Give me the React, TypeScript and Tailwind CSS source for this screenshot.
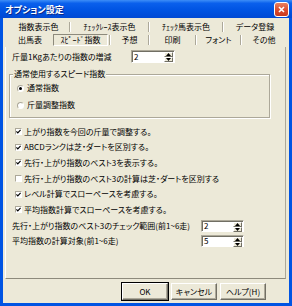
import React from "react";
import clsx from "clsx";

type Tab = { label: string; w: string; selected?: boolean; sep?: boolean };

const row1: Tab[] = [
  { label: "指数表示色", w: "w-[61px]", sep: true },
  { label: "ﾁｪｯｸﾚｰｽ表示色", w: "w-[77px]", sep: true },
  { label: "ﾁｪｯｸ馬表示色", w: "w-[72px]", sep: true },
  { label: "データ登録", w: "w-[62px]" },
];

const row2: Tab[] = [
  { label: "出馬表", w: "w-[44px]" },
  { label: "ｽﾋﾟｰﾄﾞ指数", w: "w-[57px]", selected: true, sep: true },
  { label: "予想", w: "w-[37px]", sep: true },
  { label: "印刷", w: "w-[45px]", sep: true },
  { label: "フォント", w: "w-[43px]", sep: true },
  { label: "その他", w: "w-[44px]" },
];

const checks = [
  { label: "上がり指数を今回の斤量で調整する。", on: true },
  { label: "ABCDランクは芝・ダートを区別する。", on: true },
  { label: "先行・上がり指数のベスト3を表示する。", on: true },
  { label: "先行・上がり指数のベスト3の計算は芝・ダートを区別する", on: false },
  { label: "レベル計算でスローペースを考慮する。", on: true },
  { label: "平均指数計算でスローペースを考慮する。", on: true },
];

function TabRow({ tabs }: { tabs: Tab[] }) {
  return (
    <div className="flex h-[12px] pl-[5px]">
      {tabs.map((t) => (
        <React.Fragment key={t.label}>
          {t.selected ? (
            <div className={clsx(t.w, "flex px-[1px]")}>
              <div className="flex-1 flex items-center justify-center border border-[#8d8a7c] border-r-white border-b-white">
                {t.label}
              </div>
            </div>
          ) : (
            <div className={clsx(t.w, "flex items-center justify-center")}>{t.label}</div>
          )}
          {t.sep && <div className="w-[2px] h-[10px] self-center border-l border-l-[#aca899] border-r border-r-white" />}
        </React.Fragment>
      ))}
    </div>
  );
}

function Spin({ value, w, h }: { value: string; w: string; h: string }) {
  return (
    <div className={clsx(w, h, "flex bg-white border border-[#aca899] border-r-white border-b-white shadow-[inset_1px_1px_0_#716f64]")}>
      <span className="flex-1 pl-[2px] pt-[1px] flex items-center">{value}</span>
      <div className="w-[9px] my-[1px] mr-[1px] flex flex-col">
        <div className="flex-1 flex items-center justify-center bg-[#ece9d8] border border-t-white border-l-white border-r-[#716f64] border-b-[#716f64]">
          <svg width="5" height="3" viewBox="0 0 5 3">
            <path d="M2.5 0L5 3H0z" fill="#000" />
          </svg>
        </div>
        <div className="flex-1 flex items-center justify-center bg-[#ece9d8] border border-t-white border-l-white border-r-[#716f64] border-b-[#716f64]">
          <svg width="5" height="3" viewBox="0 0 5 3">
            <path d="M0 0H5L2.5 3z" fill="#000" />
          </svg>
        </div>
      </div>
    </div>
  );
}

function Check({ on }: { on: boolean }) {
  return (
    <span className="w-[7px] h-[7px] flex items-center justify-center bg-white border border-[#aca899] border-r-white border-b-white">
      {on && (
        <svg width="5" height="5" viewBox="0 0 5 5">
          <path d="M0.4 2.3L1.8 3.8L4.6 0.8" stroke="#000" strokeWidth="1.2" fill="none" />
        </svg>
      )}
    </span>
  );
}

function Radio({ on }: { on: boolean }) {
  return (
    <span className="w-[7px] h-[7px] rounded-full flex items-center justify-center bg-white border border-[#aca899] border-r-white border-b-white">
      {on && <span className="w-[3px] h-[3px] rounded-full bg-black" />}
    </span>
  );
}

function Btn({ label, def }: { label: string; def?: boolean }) {
  return (
    <div
      className={clsx(
        "w-[46px] h-[17px] flex items-center justify-center bg-[#ece9d8] border border-t-white border-l-white border-r-[#716f64] border-b-[#716f64] shadow-[inset_-1px_-1px_0_#aca899]",
        def && "ring-1 ring-black"
      )}
    >
      {label}
    </div>
  );
}

export default function App() {
  return (
    <div className="w-[292px] h-[306px] flex flex-col bg-[#0054e3] overflow-hidden text-[8px] leading-none text-black font-['Noto_Sans_CJK_JP',sans-serif] [font-feature-settings:'palt']">
      {/* title bar */}
      <div className="h-[18px] flex items-center pl-[5px] pr-[3px] bg-[linear-gradient(180deg,#3d8ef7_0%,#0a60ec_18%,#0054e3_55%,#0049d4_100%)]">
        <span className="flex-1 text-white font-bold text-[9px] [text-shadow:1px_1px_0_#0a2a8a]">オプション設定</span>
        <div className="w-[15px] h-[15px] rounded-[3px] border border-white bg-[linear-gradient(180deg,#e9805f_0%,#d9472a_60%,#c83a1e_100%)] flex items-center justify-center">
          <svg width="7" height="7" viewBox="0 0 7 7">
            <path d="M1 1L6 6M6 1L1 6" stroke="#fff" strokeWidth="1.6" />
          </svg>
        </div>
      </div>

      {/* body */}
      <div className="flex-1 mx-[3px] mb-[3px] bg-[#ece9d8] flex flex-col">
        <div className="mt-[3px]">
          <TabRow tabs={row1} />
        </div>
        <div className="mt-[1px]">
          <TabRow tabs={row2} />
        </div>

        <div className="mt-[1px] ml-[2px] mr-[3px] h-[232px] pl-[3px] border-l border-l-white border-r border-r-[#aca899] border-b border-b-[#8d8a7c] flex flex-col">
          <div className="mt-[3px] h-[13px] flex items-center">
            <span className="ml-[3px] w-[119px]">斤量1Kgあたりの指数の増減</span>
            <Spin value="2" w="w-[44px]" h="h-[13px]" />
          </div>

          <fieldset className="mt-[7px] w-[261px] h-[48px] border border-[#aca899] shadow-[inset_1px_1px_0_#fff,1px_1px_0_#fff]">
            <legend className="ml-[3px] px-[1px] leading-[8px] bg-[#ece9d8]">通常使用するスピード指数</legend>
            <div className="mt-[4px] h-[12px] pl-[7px] flex items-center gap-[3px]">
              <Radio on />
              <span>通常指数</span>
            </div>
            <div className="mt-[5px] h-[12px] pl-[7px] flex items-center gap-[3px]">
              <Radio on={false} />
              <span>斤量調整指数</span>
            </div>
          </fieldset>

          <div className="mt-[6px] flex flex-col">
            {checks.map((c) => (
              <div key={c.label} className="h-[15.6px] pl-[6px] flex items-center gap-[2px]">
                <Check on={c.on} />
                <span>{c.label}</span>
              </div>
            ))}
          </div>

          <div className="mt-[2px] h-[12px] flex items-center">
            <span className="ml-[3px] w-[189px]">先行・上がり指数のベスト3のチェック範囲(前1~6走)</span>
            <Spin value="2" w="w-[43px]" h="h-[12px]" />
          </div>
          <div className="mt-[3px] h-[12px] flex items-center">
            <span className="ml-[3px] w-[189px]">平均指数の計算対象(前1~6走)</span>
            <Spin value="5" w="w-[43px]" h="h-[12px]" />
          </div>
        </div>

        <div className="mt-[4px] flex justify-end gap-[3px] pr-[23px]">
          <Btn label="OK" def />
          <Btn label="キャンセル" />
          <Btn label="ヘルプ(H)" />
        </div>
      </div>
    </div>
  );
}
